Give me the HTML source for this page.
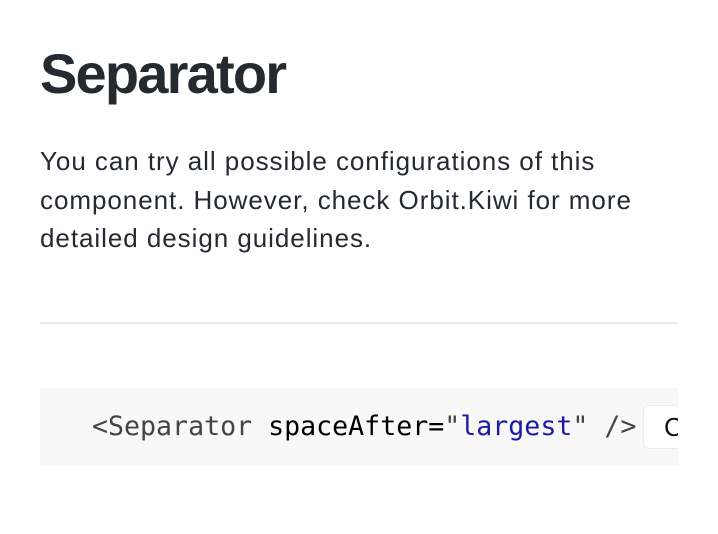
<!DOCTYPE html>
<html><head><style>
html,body{margin:0;padding:0;background:#fff;width:718px;height:534px;overflow:hidden}
body{font-family:"Liberation Sans",sans-serif;color:#252a31;position:relative}
h1{position:absolute;left:40px;top:38px;margin:0;font-size:56px;font-weight:bold;letter-spacing:-1.8px;line-height:72px}
p{position:absolute;left:40px;top:142px;margin:0;font-size:26px;letter-spacing:0.95px;line-height:38.5px;width:700px;white-space:nowrap}
.sep{position:absolute;left:40px;top:322px;width:638px;height:2px;background:#e8edf1}
.code{position:absolute;left:40px;top:388px;width:638px;height:77px;background:#f8f8f8;overflow:hidden}
.c{position:absolute;left:52px;top:21px;font-family:"DejaVu Sans Mono",monospace;font-size:26.6px;line-height:36px;white-space:nowrap;color:#000}
.g{color:#444}.b{color:#1a1aa6}
.btn{position:absolute;left:603px;top:17px;width:60px;height:42px;background:#fff;border:1px solid #ececec;border-radius:6px;font-size:26px;line-height:42px;padding-left:20px;color:#111}
</style></head><body>
<h1>Separator</h1>
<p>You can try all possible configurations of this<br>component. However, check Orbit.Kiwi for more<br>detailed design guidelines.</p>
<div class="sep"></div>
<div class="code"><div class="c"><span class="g">&lt;Separator</span> spaceAfter=<span class="g">"</span><span class="b">largest</span><span class="g">" /&gt;</span></div><div class="btn">C</div></div>
</body></html>
